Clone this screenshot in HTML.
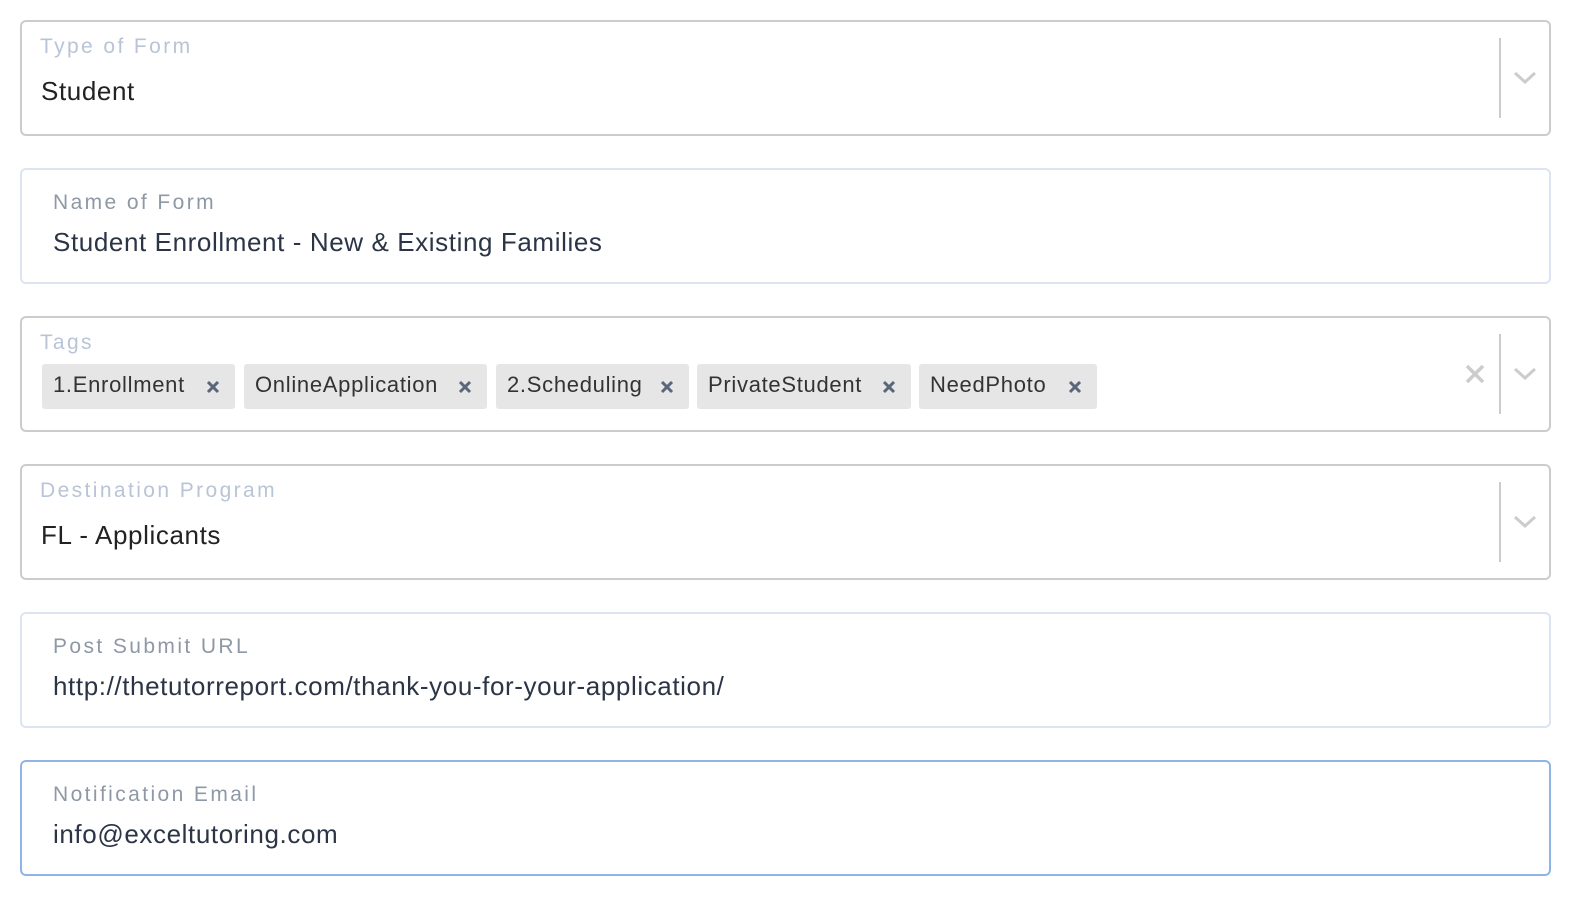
<!DOCTYPE html>
<html><head><meta charset="utf-8"><style>
*{box-sizing:border-box;margin:0;padding:0}
body{width:1570px;height:904px;background:#fff;font-family:"Liberation Sans",sans-serif;position:relative;overflow:hidden}
.box{position:absolute;left:20px;width:1531px;height:116px;border-radius:6px;background:#fff}
.sel{border:2px solid #cccccc}
.inp{border:2px solid #dbe4f0}
.foc{border:2px solid #8fb5e6}
.lab{position:absolute;font-size:21px;letter-spacing:2.4px}
.sel .lab{left:18px;top:13px;color:#b9c4d6}
.inp .lab,.foc .lab{left:31px;top:21px;color:#8e98a6}
.val{position:absolute;font-size:26px;color:#2a2f38;letter-spacing:0.6px}
.sel .val{left:19px;top:54px;color:#222}
.inp .val,.foc .val{left:31px;top:57px;color:#2b3545}
.div{position:absolute;right:48px;top:16px;width:2px;height:80px;background:#cccccc}
.chev{position:absolute;right:12px;top:48px}
.chip{position:absolute;top:46px;height:45px;background:#e6e6e6;border-radius:3px;font-size:22px;color:#333;padding:8px 0 0 11px;letter-spacing:0.7px}
.chip svg{position:absolute;right:15px;top:16px}
</style></head><body>

<div class="box sel" style="top:20px"><div class="lab">Type of Form</div><div class="val">Student</div><div class="div"></div>
<svg class="chev" width="24" height="16" viewBox="0 0 24 16"><path d="M2 3 L12 12 L22 3" stroke="#cccccc" stroke-width="3" fill="none"/></svg></div>

<div class="box inp" style="top:168px"><div class="lab">Name of Form</div><div class="val">Student Enrollment - New &amp; Existing Families</div></div>

<div class="box sel" style="top:316px"><div class="lab">Tags</div>
<div class="chip" style="left:20px;width:193px">1.Enrollment<svg width="14" height="14" viewBox="0 0 14 14"><path d="M2 2L12 12M12 2L2 12" stroke="#5a6679" stroke-width="3"/></svg></div>
<div class="chip" style="left:222px;width:243px">OnlineApplication<svg width="14" height="14" viewBox="0 0 14 14"><path d="M2 2L12 12M12 2L2 12" stroke="#5a6679" stroke-width="3"/></svg></div>
<div class="chip" style="left:474px;width:193px">2.Scheduling<svg width="14" height="14" viewBox="0 0 14 14"><path d="M2 2L12 12M12 2L2 12" stroke="#5a6679" stroke-width="3"/></svg></div>
<div class="chip" style="left:675px;width:214px">PrivateStudent<svg width="14" height="14" viewBox="0 0 14 14"><path d="M2 2L12 12M12 2L2 12" stroke="#5a6679" stroke-width="3"/></svg></div>
<div class="chip" style="left:897px;width:178px">NeedPhoto<svg width="14" height="14" viewBox="0 0 14 14"><path d="M2 2L12 12M12 2L2 12" stroke="#5a6679" stroke-width="3"/></svg></div>
<svg style="position:absolute;right:64px;top:46px" width="20" height="20" viewBox="0 0 20 20"><path d="M2 2L18 18M18 2L2 18" stroke="#cccccc" stroke-width="3.5"/></svg>
<div class="div"></div>
<svg class="chev" width="24" height="16" viewBox="0 0 24 16"><path d="M2 3 L12 12 L22 3" stroke="#cccccc" stroke-width="3" fill="none"/></svg></div>

<div class="box sel" style="top:464px"><div class="lab">Destination Program</div><div class="val">FL - Applicants</div><div class="div"></div>
<svg class="chev" width="24" height="16" viewBox="0 0 24 16"><path d="M2 3 L12 12 L22 3" stroke="#cccccc" stroke-width="3" fill="none"/></svg></div>

<div class="box inp" style="top:612px"><div class="lab">Post Submit URL</div><div class="val">http://thetutorreport.com/thank-you-for-your-application/</div></div>

<div class="box foc" style="top:760px"><div class="lab">Notification Email</div><div class="val">info@exceltutoring.com</div></div>

</body></html>
